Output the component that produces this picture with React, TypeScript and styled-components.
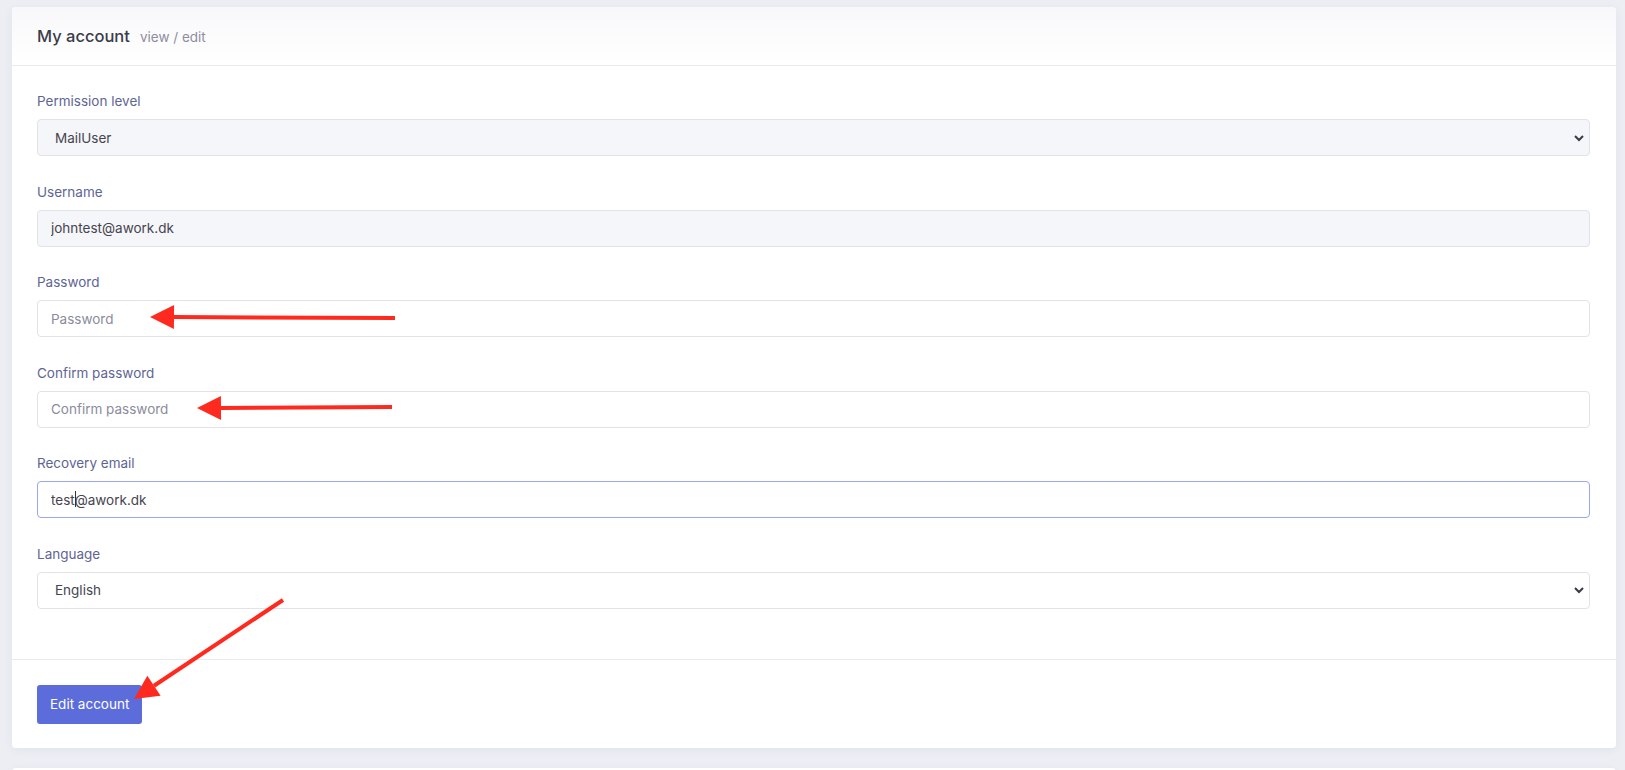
import React from "react";
import styled, { createGlobalStyle } from "styled-components";

const GlobalStyle = createGlobalStyle`
  html, body {
    margin: 0;
    padding: 0;
    background: #eceef4;
    font-family: Inter, "Noto Sans", "Liberation Sans", sans-serif;
  }
  * { box-sizing: border-box; }
`;

const Page = styled.div`
  position: relative;
  padding: 7px 9px 0 12px;
`;

const Card = styled.div`
  background: #fff;
  border-radius: 4px;
  box-shadow: 0 2px 10px rgba(60, 70, 110, 0.06);
  margin-bottom: 20px;
`;

const CardHeader = styled.div`
  height: 59px;
  display: flex;
  align-items: center;
  gap: 10px;
  padding: 0 25px;
  border-bottom: 1px solid #e9eaf0;
  background: linear-gradient(#f8f8fa, #ffffff);
  border-radius: 4px 4px 0 0;
`;

const Title = styled.h1`
  margin: 0;
  font-size: 16.5px;
  font-weight: 500;
  color: #3b3b4a;
`;

const Sub = styled.span`
  font-size: 13.5px;
  color: #8d8d9c;
  padding-top: 2px;
`;

const Form = styled.div`
  padding: 25px 26px 50px 25px;
  display: flex;
  flex-direction: column;
  gap: 25.6px;
`;

const Field = styled.div`
  display: flex;
  flex-direction: column;
  gap: 8px;
`;

const Label = styled.label`
  font-size: 13.5px;
  line-height: 20px;
  color: #5e6593;
`;

const Input = styled.input<{ $muted?: boolean; $focus?: boolean }>`
  height: 37px;
  width: 100%;
  padding: 0 13px;
  font-family: inherit;
  font-size: 13.5px;
  color: #45454f;
  background: ${(p) => (p.$muted ? "#f5f6f9" : "#fff")};
  border: 1px solid ${(p) => (p.$focus ? "#9aa6f0" : "#e1e3ea")};
  border-radius: 4px;
  outline: none;

  &::placeholder {
    color: #8a8c9c;
  }
`;

const SelectWrap = styled.div`
  position: relative;
`;

const Select = styled.select<{ $muted?: boolean }>`
  appearance: none;
  height: 37px;
  width: 100%;
  padding: 0 17px;
  font-family: inherit;
  font-size: 13.5px;
  color: #45454f;
  background: ${(p) => (p.$muted ? "#f5f6f9" : "#fff")};
  border: 1px solid #e1e3ea;
  border-radius: 4px;
  outline: none;
`;

const Chevron = styled.svg`
  position: absolute;
  right: 3px;
  top: 50%;
  transform: translateY(-50%);
  pointer-events: none;
`;

const Footer = styled.div`
  border-top: 1px solid #e9eaf0;
  padding: 25px 25px 24px;
`;

const Button = styled.button`
  height: 39px;
  padding: 0 13px;
  border: none;
  border-radius: 3px;
  background: #5c6ddb;
  color: #fff;
  font-family: inherit;
  font-size: 13.5px;
  cursor: pointer;
`;

const Marks = styled.svg`
  position: absolute;
  left: 0;
  top: 0;
  pointer-events: none;
`;

const Arrow = ({ x1, y1, x2, y2 }: { x1: number; y1: number; x2: number; y2: number }) => {
  const a = Math.atan2(y2 - y1, x2 - x1);
  const len = 24;
  const w = 12;
  const bx = x2 - Math.cos(a) * len;
  const by = y2 - Math.sin(a) * len;
  const px = -Math.sin(a) * w;
  const py = Math.cos(a) * w;
  return (
    <g>
      <line x1={x1} y1={y1} x2={bx} y2={by} stroke="#ff2a1f" strokeWidth={4} />
      <polygon points={`${x2},${y2} ${bx + px},${by + py} ${bx - px},${by - py}`} fill="#ff2a1f" />
    </g>
  );
};

const ChevronIcon = () => (
  <Chevron width="16" height="16" viewBox="0 0 16 16">
    <path d="M4 6l4 4 4-4" fill="none" stroke="#3a3a44" strokeWidth="2" />
  </Chevron>
);

export default function App() {
  return (
    <>
      <GlobalStyle />
      <Page>
        <Card>
          <CardHeader>
            <Title>My account</Title>
            <Sub>view / edit</Sub>
          </CardHeader>
          <Form>
            <Field>
              <Label>Permission level</Label>
              <SelectWrap>
                <Select $muted defaultValue="MailUser">
                  <option>MailUser</option>
                </Select>
                <ChevronIcon />
              </SelectWrap>
            </Field>
            <Field>
              <Label>Username</Label>
              <Input $muted readOnly defaultValue="johntest@awork.dk" />
            </Field>
            <Field>
              <Label>Password</Label>
              <Input type="password" placeholder="Password" />
            </Field>
            <Field>
              <Label>Confirm password</Label>
              <Input type="password" placeholder="Confirm password" />
            </Field>
            <Field>
              <Label>Recovery email</Label>
              <Input $focus defaultValue="test@awork.dk" />
            </Field>
            <Field>
              <Label>Language</Label>
              <SelectWrap>
                <Select defaultValue="English">
                  <option>English</option>
                </Select>
                <ChevronIcon />
              </SelectWrap>
            </Field>
          </Form>
          <Footer>
            <Button>Edit account</Button>
          </Footer>
        </Card>
        <Card style={{ height: 40 }} />
        <Marks width="1625" height="770">
          <line x1={75.5} y1={491} x2={75.5} y2={507} stroke="#333" strokeWidth={1} />
          <Arrow x1={395} y1={318} x2={150} y2={317} />
          <Arrow x1={392} y1={407} x2={197} y2={408} />
          <Arrow x1={283} y1={600} x2={134} y2={699} />
        </Marks>
      </Page>
    </>
  );
}
